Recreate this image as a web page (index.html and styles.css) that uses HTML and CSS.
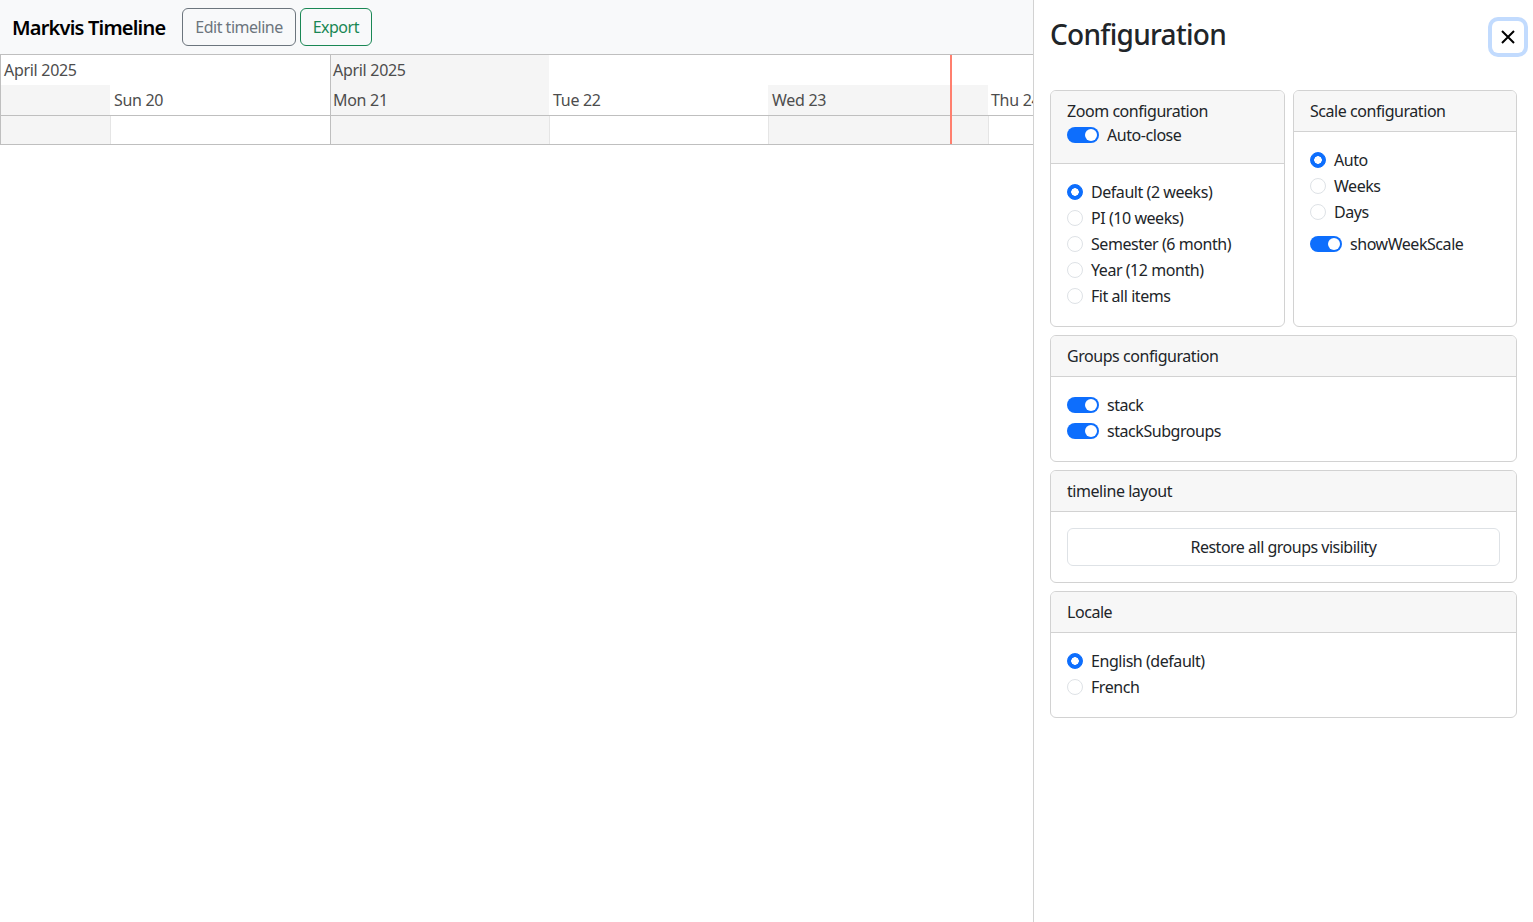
FILE: index.html
```html
<!DOCTYPE html>
<html lang="en">
<head>
<meta charset="utf-8">
<title>Markvis Timeline</title>
<link rel="stylesheet" href="styles.css">
</head>
<body>
<header class="topbar">
  <span class="brand">Markvis Timeline</span>
  <button class="btn btn-secondary">Edit timeline</button>
  <button class="btn btn-success">Export</button>
</header>

<div class="timeline">
  <div class="axis-row major">
    <div class="cell" style="width:329px">April 2025</div>
    <div class="cell shade line-major" style="width:219px">April 2025</div>
    <div class="cell fill"></div>
  </div>
  <div class="axis-row minor">
    <div class="cell shade" style="width:109px"></div>
    <div class="cell" style="width:220px">Sun 20</div>
    <div class="cell shade line-major" style="width:219px">Mon 21</div>
    <div class="cell" style="width:219px">Tue 22</div>
    <div class="cell shade" style="width:220px">Wed 23</div>
    <div class="cell fill">Thu 24</div>
  </div>
  <div class="axis-row content">
    <div class="cell shade" style="width:109px"></div>
    <div class="cell line-minor" style="width:220px"></div>
    <div class="cell shade line-major" style="width:219px"></div>
    <div class="cell line-minor" style="width:219px"></div>
    <div class="cell shade line-minor" style="width:220px"></div>
    <div class="cell fill line-minor"></div>
  </div>
  <div class="current-time" style="left:949px"></div>
</div>

<aside class="offcanvas">
  <div class="oc-header">
    <h3 class="oc-title">Configuration</h3>
    <button class="btn-close" aria-label="Close">
      <svg width="16" height="16" viewBox="0 0 16 16"><path d="M2 2L14 14M14 2L2 14" stroke="#000" stroke-width="2" fill="none"/></svg>
    </button>
  </div>
  <div class="oc-body">
    <div class="top-row">
      <section class="card">
        <div class="card-header tall">
          <div>Zoom configuration</div>
          <label class="check switch-row"><span class="switch"></span>Auto-close</label>
        </div>
        <div class="card-body">
          <label class="check"><span class="radio on"></span>Default (2 weeks)</label>
          <label class="check"><span class="radio"></span>PI (10 weeks)</label>
          <label class="check"><span class="radio"></span>Semester (6 month)</label>
          <label class="check"><span class="radio"></span>Year (12 month)</label>
          <label class="check"><span class="radio"></span>Fit all items</label>
        </div>
      </section>
      <section class="card">
        <div class="card-header">Scale configuration</div>
        <div class="card-body">
          <label class="check"><span class="radio on"></span>Auto</label>
          <label class="check"><span class="radio"></span>Weeks</label>
          <label class="check"><span class="radio"></span>Days</label>
          <label class="check switch-row spaced"><span class="switch"></span>showWeekScale</label>
        </div>
      </section>
    </div>

    <section class="card">
      <div class="card-header">Groups configuration</div>
      <div class="card-body">
        <label class="check switch-row"><span class="switch"></span>stack</label>
        <label class="check switch-row"><span class="switch"></span>stackSubgroups</label>
      </div>
    </section>

    <section class="card">
      <div class="card-header">timeline layout</div>
      <div class="card-body">
        <button class="btn btn-light-block">Restore all groups visibility</button>
      </div>
    </section>

    <section class="card">
      <div class="card-header">Locale</div>
      <div class="card-body">
        <label class="check"><span class="radio on"></span>English (default)</label>
        <label class="check"><span class="radio"></span>French</label>
      </div>
    </section>
  </div>
</aside>
</body>
</html>
```

FILE: styles.css
```css
* { box-sizing: border-box; }

html, body {
  margin: 0;
  padding: 0;
  background: #fff;
  font-family: "Noto Sans", "Open Sans", sans-serif;
  font-size: 16px;
  color: #212529;
}

.topbar {
  display: flex;
  align-items: center;
  height: 54px;
  padding: 8px 12px;
  background: #f8f9fa;
  gap: 4px;
}

.brand {
  font-size: 20px;
  font-weight: 600;
  color: #000;
  margin-right: 13px;
  letter-spacing: -0.8px;
}

.btn {
  font-family: inherit;
  font-size: 16px;
  line-height: 24px;
  height: 38px;
  padding: 6px 12px;
  border-radius: 6px;
  background: transparent;
  border: 1px solid;
  letter-spacing: -0.5px;
}

.btn-secondary { color: #6c757d; border-color: #6c757d; }
.btn-success { color: #198754; border-color: #198754; }

.timeline {
  position: relative;
  border-top: 1px solid #bfbfbf;
  border-left: 1px solid #bfbfbf;
  border-bottom: 1px solid #bfbfbf;
  color: #4d4d4d;
}

.axis-row {
  display: flex;
  overflow: hidden;
  white-space: nowrap;
}

.axis-row.major { height: 30px; }
.axis-row.minor { height: 31px; border-bottom: 1px solid #bfbfbf; }
.axis-row.content { height: 28px; }

.cell {
  flex: none;
  height: 100%;
  line-height: 30px;
  padding-left: 3px;
  letter-spacing: -0.3px;
}

.cell.fill { flex: 1; }
.cell.shade { background: #f5f5f5; }
.cell.line-major { border-left: 1px solid #bfbfbf; padding-left: 2px; }
.cell.line-minor { border-left: 1px solid #e5e5e5; }
.axis-row.minor .cell { padding-left: 4px; }
.axis-row.minor .cell.fill { padding-left: 3px; }
.axis-row.minor .cell.line-major { padding-left: 2px; }

.current-time {
  position: absolute;
  top: 0;
  bottom: 0;
  width: 2px;
  background: #ff7f6e;
}

.offcanvas {
  position: fixed;
  top: 0;
  right: 0;
  bottom: 0;
  width: 500px;
  background: #fff;
  border-left: 1px solid #d2d2d2;
  display: flex;
  flex-direction: column;
}

.oc-header {
  display: flex;
  align-items: center;
  justify-content: space-between;
  padding: 16px;
  height: 74px;
}

.oc-title {
  margin: 0 0 4px;
  font-size: 28px;
  font-weight: 500;
  line-height: 1.2;
  letter-spacing: -0.7px;
}

.btn-close {
  width: 32px;
  height: 32px;
  margin-right: -7px;
  padding: 0;
  border: 0;
  border-radius: 6px;
  background: transparent;
  box-shadow: 0 0 0 4px #c2dbfe;
  display: flex;
  align-items: center;
  justify-content: center;
}

.oc-body {
  padding: 16px;
  display: flex;
  flex-direction: column;
  gap: 8px;
}

.top-row {
  display: grid;
  grid-template-columns: 235px 1fr;
  gap: 8px;
}

.card {
  border: 1px solid #d2d2d2;
  border-radius: 6px;
  overflow: hidden;
  letter-spacing: -0.45px;
}

.card-header {
  background: #f7f7f7;
  border-bottom: 1px solid #d2d2d2;
  padding: 8px 16px;
  line-height: 24px;
}

.card-header.tall { padding-bottom: 14px; }

.card-body {
  padding: 16px;
}

.check {
  display: flex;
  align-items: center;
  gap: 8px;
  height: 24px;
  line-height: 24px;
  margin-bottom: 2px;
}

.switch-row { gap: 8px; }
.spaced { margin-top: 8px; }

.radio {
  flex: none;
  width: 16px;
  height: 16px;
  border-radius: 50%;
  border: 1px solid #dee2e6;
  background: #fff;
}

.radio.on {
  border-color: #0d6efd;
  background: radial-gradient(circle, #fff 0 3.5px, #0d6efd 4px);
}

.switch {
  flex: none;
  position: relative;
  width: 32px;
  height: 16px;
  border-radius: 8px;
  background: #0d6efd;
}

.switch::after {
  content: "";
  position: absolute;
  right: 2px;
  top: 2px;
  width: 12px;
  height: 12px;
  border-radius: 50%;
  background: #fff;
}

.btn-light-block {
  display: block;
  width: 100%;
  color: #212529;
  border-color: #dee2e6;
  background: #fff;
}
```
